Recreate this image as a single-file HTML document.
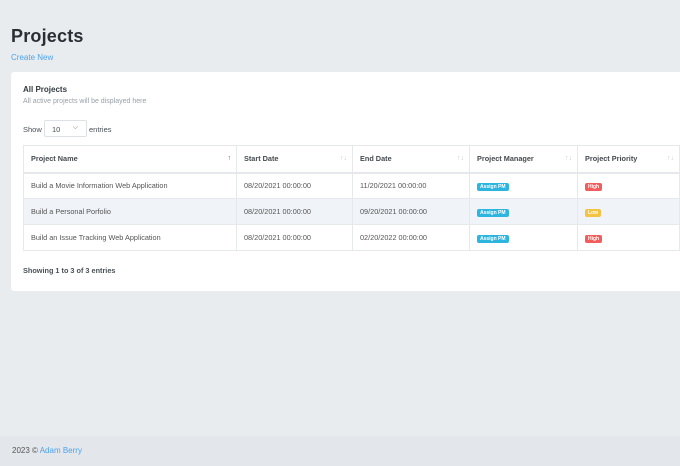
<!DOCTYPE html>
<html><head><style>
*{box-sizing:border-box;margin:0;padding:0}
body{width:680px;height:466px;background:#e9ecef;font-family:"Liberation Sans",sans-serif;position:relative;overflow:hidden;color:#495057}
h1{position:absolute;left:11px;top:26px;font-size:18px;font-weight:bold;color:#2b2f33;letter-spacing:0.2px}
.cn{position:absolute;left:11px;top:53px;font-size:8px;color:#4aa3f0}
.card{position:absolute;left:11px;top:72px;width:680px;height:219px;background:#fff;border-radius:3px}
.t1{position:absolute;left:12px;top:13px;font-size:8px;font-weight:bold;color:#343a40}
.t2{position:absolute;left:12px;top:26px;font-size:7px;color:#98a0a8}
.show{position:absolute;left:12px;top:53px;font-size:7.5px;color:#495057}
.sel{position:absolute;left:33px;top:48px;width:43px;height:17px;border:1px solid #dde1e5;border-radius:2px;font-size:7.5px;padding:4px 0 0 7px}
.sel span{position:absolute;right:8px;top:3px;font-size:7px;color:#666}
.ent{position:absolute;left:78px;top:53px;font-size:7.5px}
table{position:absolute;left:12px;top:73px;border-collapse:collapse;font-size:7.3px;color:#555}
td,th{border:1px solid #e6e8eb;height:26px;padding:0 7px;text-align:left;position:relative}
th{height:27px;font-weight:bold;color:#454a50;border-bottom:2px solid #e6e8eb}
th i{position:absolute;right:5px;top:9px;font-style:normal;color:#ccc;font-size:7px}
tr.s td{background:#f0f3f8}
.b{display:inline-block;font-size:5px;font-weight:bold;color:#fff;padding:1px 3px;border-radius:2px}
.bl{background:#2db5e0}.r{background:#f25c5c}.y{background:#f5c342}
.sh{position:absolute;left:12px;top:194px;font-size:7.3px;font-weight:bold;color:#495057}
.foot{position:absolute;left:0;top:436px;width:680px;height:30px;background:#e3e6ea;font-size:8px;padding:10px 0 0 12px;color:#555}
.foot a{color:#4aa3f0}
</style></head><body>
<h1>Projects</h1>
<div class="cn">Create New</div>
<div class="card">
<div class="t1">All Projects</div>
<div class="t2">All active projects will be displayed here</div>
<div class="show">Show</div>
<div class="sel">10<span>⌵</span></div>
<div class="ent">entries</div>
<table>
<tr><th style="width:213px">Project Name<i style="color:#666">↑</i></th><th style="width:116px">Start Date<i>↑↓</i></th><th style="width:117px">End Date<i>↑↓</i></th><th style="width:108px">Project Manager<i>↑↓</i></th><th style="width:102px">Project Priority<i>↑↓</i></th></tr>
<tr><td>Build a Movie Information Web Application</td><td>08/20/2021 00:00:00</td><td>11/20/2021 00:00:00</td><td><span class="b bl">Assign PM</span></td><td><span class="b r">High</span></td></tr>
<tr class="s"><td>Build a Personal Porfolio</td><td>08/20/2021 00:00:00</td><td>09/20/2021 00:00:00</td><td><span class="b bl">Assign PM</span></td><td><span class="b y">Low</span></td></tr>
<tr><td>Build an Issue Tracking Web Application</td><td>08/20/2021 00:00:00</td><td>02/20/2022 00:00:00</td><td><span class="b bl">Assign PM</span></td><td><span class="b r">High</span></td></tr>
</table>
<div class="sh">Showing 1 to 3 of 3 entries</div>
</div>
<div class="foot">2023 © <a>Adam Berry</a></div>
</body></html>
